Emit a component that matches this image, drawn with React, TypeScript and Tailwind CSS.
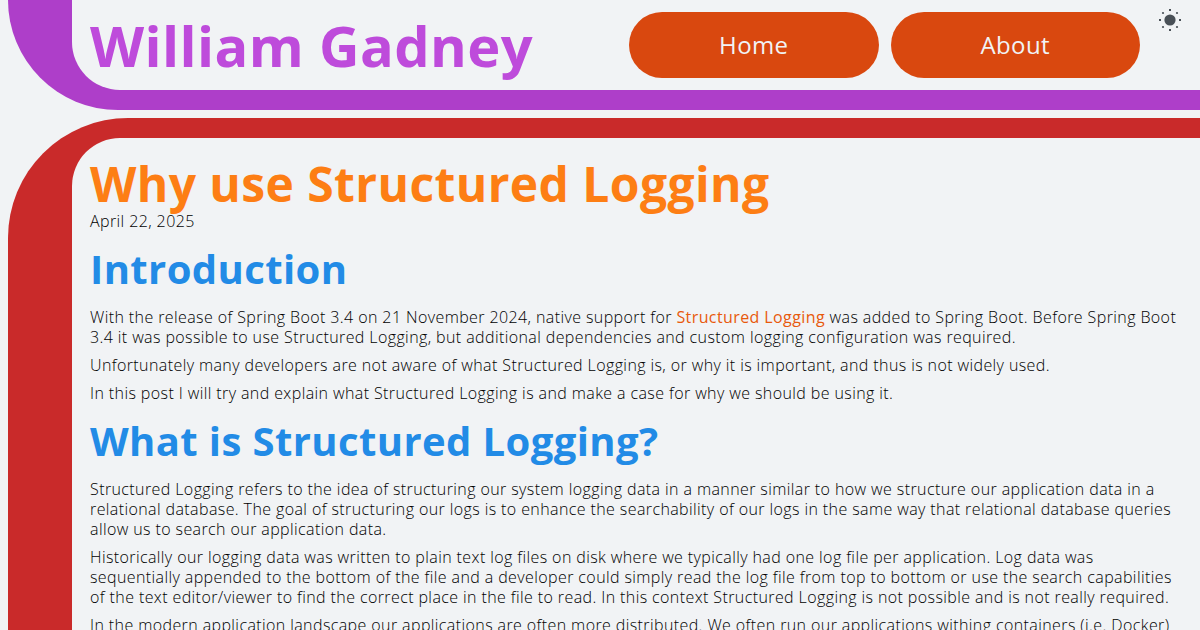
import { useState, type ReactNode } from "react";

function NavLink({ href, children }: { href: string; children: ReactNode }) {
  return (
    <a
      href={href}
      className="flex flex-1 items-center justify-center rounded-full bg-[#d9480f] text-2xl font-normal text-[#f1f3f5]"
    >
      {children}
    </a>
  );
}

function SunIcon() {
  return (
    <svg viewBox="0 0 24 24" className="size-6" fill="#495057" aria-hidden="true">
      <circle cx="12" cy="12" r="5.6" />
      <rect x="11" y="1" width="2" height="2" />
      <rect x="11" y="21" width="2" height="2" />
      <rect x="1" y="11" width="2" height="2" />
      <rect x="21" y="11" width="2" height="2" />
      <circle cx="5" cy="5" r="1.1" />
      <circle cx="19" cy="5" r="1.1" />
      <circle cx="5" cy="19" r="1.1" />
      <circle cx="19" cy="19" r="1.1" />
    </svg>
  );
}

function SectionTitle({ children }: { children: ReactNode }) {
  return <h2 className="text-[40px] leading-15 font-bold text-[#228be6]">{children}</h2>;
}

export default function App() {
  const [dimmed, setDimmed] = useState(false);

  return (
    <div className="flex h-screen flex-col gap-2 overflow-hidden bg-[#f1f3f5] pl-2 font-['Open_Sans',sans-serif] font-light tracking-wide text-black">
      <header className="shrink-0 rounded-bl-[120px] bg-[#ae3ec9] pb-5 pl-16">
        <div className="flex items-stretch rounded-bl-[48px] bg-[#f1f3f5] pl-[18px]">
          <div className="flex flex-1 items-center">
            <h1 className="text-[56px] leading-[90px] font-bold whitespace-nowrap text-[#be4bdb]">
              William Gadney
            </h1>
          </div>
          <nav className="flex w-[511px] gap-3 py-3" aria-label="Main">
            <NavLink href="#home">Home</NavLink>
            <NavLink href="#about">About</NavLink>
          </nav>
          <div className="flex w-15 items-start justify-center pt-2">
            <button
              type="button"
              aria-label="Toggle theme"
              aria-pressed={dimmed}
              onClick={() => setDimmed(!dimmed)}
              className="cursor-pointer"
            >
              <SunIcon />
            </button>
          </div>
        </div>
      </header>

      <main className="flex min-h-0 flex-1 flex-col rounded-tl-[120px] bg-[#c92a2a] pt-5 pl-16">
        <article className="flex-1 overflow-hidden rounded-tl-[48px] bg-[#f1f3f5] px-[18px] pt-[18px] text-base leading-5">
          <h1 className="text-5xl leading-[55px] font-bold text-[#fd7e14]">
            Why use Structured Logging
          </h1>
          <time dateTime="2025-04-22" className="block">
            April 22, 2025
          </time>

          <section className="flex flex-col gap-2 pt-2">
            <SectionTitle>Introduction</SectionTitle>
            <p>
              With the release of Spring Boot 3.4 on 21 November 2024, native support for{" "}
              <a href="#structured-logging" className="font-normal text-[#e8590c]">
                Structured Logging
              </a>{" "}
              was added to Spring Boot. Before Spring Boot 3.4 it was possible to use Structured
              Logging, but additional dependencies and custom logging configuration was required.
            </p>
            <p>
              Unfortunately many developers are not aware of what Structured Logging is, or why it
              is important, and thus is not widely used.
            </p>
            <p>
              In this post I will try and explain what Structured Logging is and make a case for why
              we should be using it.
            </p>
          </section>

          <section id="structured-logging" className="flex flex-col gap-2 pt-2">
            <SectionTitle>What is Structured Logging?</SectionTitle>
            <p>
              Structured Logging refers to the idea of structuring our system logging data in a
              manner similar to how we structure our application data in a relational database. The
              goal of structuring our logs is to enhance the searchability of our logs in the same
              way that relational database queries allow us to search our application data.
            </p>
            <p>
              Historically our logging data was written to plain text log files on disk where we
              typically had one log file per application. Log data was sequentially appended to the
              bottom of the file and a developer could simply read the log file from top to bottom
              or use the search capabilities of the text editor/viewer to find the correct place in
              the file to read. In this context Structured Logging is not possible and is not really
              required.
            </p>
            <p>
              In the modern application landscape our applications are often more distributed. We
              often run our applications withing containers (i.e. Docker)
            </p>
          </section>
        </article>
      </main>
    </div>
  );
}
